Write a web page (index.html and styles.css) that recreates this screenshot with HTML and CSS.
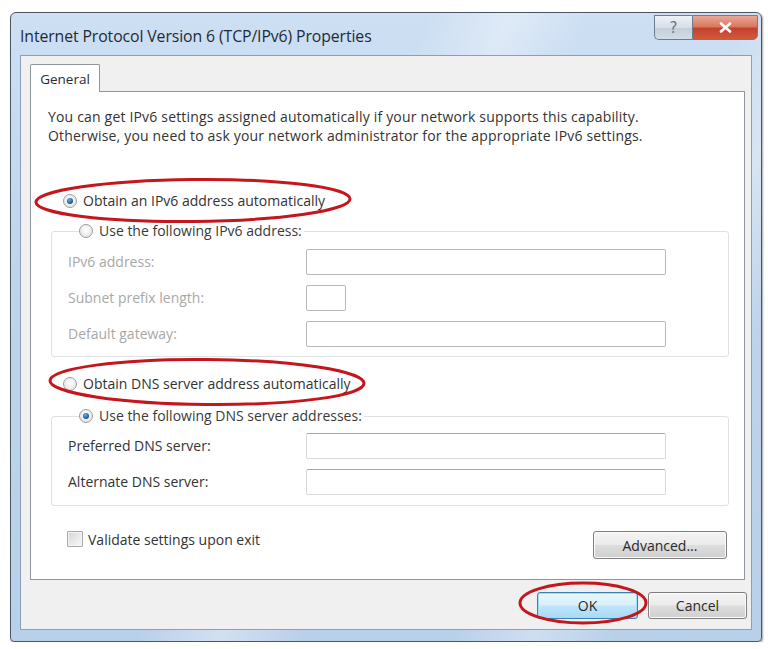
FILE: index.html
```html
<!DOCTYPE html>
<html>
<head>
<meta charset="utf-8">
<link rel="stylesheet" href="styles.css">
</head>
<body>
<div class="window">
  <div class="titlebar">
    <div class="title">Internet Protocol Version 6 (TCP/IPv6) Properties</div>
    <div class="caption">
      <div class="cap help">?</div>
      <div class="cap close">
        <svg width="13" height="11" viewBox="0 0 13 11"><path d="M2 1.5 L11 9.5 M11 1.5 L2 9.5" stroke="#fff" stroke-width="2.6" stroke-linecap="round"/></svg>
      </div>
    </div>
  </div>
  <div class="client">
    <div class="tabs"><div class="tab">General</div></div>
    <div class="panel">
      <p class="desc">You can get IPv6 settings assigned automatically if your network supports this capability.<br>Otherwise, you need to ask your network administrator for the appropriate IPv6 settings.</p>
      <div class="option first"><span class="radio checked"></span><span>Obtain an IPv6 address automatically</span></div>
      <fieldset class="group">
        <legend class="option"><span class="radio"></span><span>Use the following IPv6 address:</span></legend>
        <div class="fields disabled">
          <span class="lbl">IPv6 address:</span><span class="input wide"></span>
          <span class="lbl">Subnet prefix length:</span><span class="input small"></span>
          <span class="lbl">Default gateway:</span><span class="input wide"></span>
        </div>
      </fieldset>
      <div class="option second"><span class="radio"></span><span>Obtain DNS server address automatically</span></div>
      <fieldset class="group dns">
        <legend class="option"><span class="radio checked"></span><span>Use the following DNS server addresses:</span></legend>
        <div class="fields">
          <span class="lbl">Preferred DNS server:</span><span class="input wide"></span>
          <span class="lbl">Alternate DNS server:</span><span class="input wide"></span>
        </div>
      </fieldset>
      <div class="bottom">
        <div class="check-row"><span class="check"></span><span>Validate settings upon exit</span></div>
        <div class="btn adv">Advanced...</div>
      </div>
      <svg class="ring ring1" viewBox="0 0 320 47"><ellipse cx="160" cy="23.5" rx="157" ry="21" fill="none" stroke="#c4161c" stroke-width="3" transform="rotate(-0.6 160 23.5)"/></svg>
      <svg class="ring ring2" viewBox="0 0 320 50"><ellipse cx="160" cy="25" rx="157" ry="22.5" fill="none" stroke="#c4161c" stroke-width="3" transform="rotate(0.5 160 25)"/></svg>
    </div>
    <div class="actions">
      <div class="btn ok">OK</div>
      <div class="btn">Cancel</div>
    </div>
    <svg class="ring ring3" viewBox="0 0 132 46"><ellipse cx="66" cy="23" rx="63" ry="20" fill="none" stroke="#c4161c" stroke-width="3"/></svg>
  </div>
</div>
</body>
</html>
```
FILE: styles.css
```css
html, body {
  margin: 0;
  padding: 0;
  background: #ffffff;
}
body {
  font-family: "Open Sans", "Noto Sans", sans-serif;
  font-size: 14px;
  color: #333333;
  padding: 12px 0 0 10px;
}
.window {
  width: 752px;
  height: 630px;
  border: 1px solid #4c5663;
  border-radius: 6px 6px 4px 4px;
  background:
    linear-gradient(115deg, rgba(255,255,255,0) 40%, rgba(255,255,255,0.35) 48%, rgba(255,255,255,0) 56%, rgba(255,255,255,0) 70%, rgba(255,255,255,0.3) 78%, rgba(255,255,255,0) 86%),
    linear-gradient(to bottom, #cddff3 0%, #bed4ec 45%, #b9d0ea 100%);
  padding: 0 9px 11px 9px;
  box-sizing: border-box;
  display: flex;
  flex-direction: column;
  box-shadow: 1px 1px 2px rgba(0,0,0,0.35);
}
.titlebar {
  height: 42px;
  display: flex;
  justify-content: space-between;
  align-items: flex-start;
  flex: none;
}
.title {
  font-size: 15.8px;
  color: #1f2a36;
  padding-top: 12px;
  letter-spacing: -0.1px;
}
.caption {
  display: flex;
  margin-top: 2px;
  margin-right: -6px;
}
.cap {
  height: 23px;
  border: 1px solid #6c7d92;
  box-sizing: content-box;
  display: flex;
  align-items: center;
  justify-content: center;
}
.help {
  width: 37px;
  border-radius: 0 0 0 5px;
  border-right: none;
  background: linear-gradient(to bottom, #eef2f6 0%, #d6dee7 50%, #c3ced9 51%, #d2dce6 100%);
  color: #6a7684;
  font-family: "DejaVu Sans", sans-serif;
  font-size: 15px;
}
.close {
  width: 64px;
  border-radius: 0 0 5px 0;
  background: linear-gradient(to bottom, #e9a895 0%, #d8765d 48%, #c4402a 52%, #cf5a3e 100%);
}
.client {
  flex: 1;
  background: #f0f0f0;
  border: 1px solid #8aa0ba;
  position: relative;
  display: flex;
  flex-direction: column;
  padding: 8px 6px 0 9px;
}
.tabs {
  display: flex;
  height: 28px;
  margin-bottom: -1px;
  position: relative;
  z-index: 1;
}
.tab {
  width: 68px;
  background: #ffffff;
  border: 1px solid #8e959d;
  border-bottom: none;
  border-radius: 2px 2px 0 0;
  display: flex;
  align-items: center;
  justify-content: center;
  color: #2a2a2a;
  font-size: 13.5px;
}
.panel {
  background: #ffffff;
  border: 1px solid #8e959d;
  height: 489px;
  box-sizing: border-box;
  position: relative;
  padding: 16px 17px 0 17px;
}
.desc {
  margin: 0;
  line-height: 18.5px;
  letter-spacing: 0.18px;
}
.option {
  display: flex;
  align-items: center;
  gap: 6px;
  height: 18px;
  line-height: 18px;
}
.first {
  margin-top: 47px;
  margin-left: 15px;
}
.second {
  margin-top: 18px;
  margin-left: 15px;
}
.radio {
  width: 12px;
  height: 12px;
  border: 1px solid #9a9ea3;
  border-radius: 50%;
  background: radial-gradient(circle at 50% 40%, #ffffff 0%, #e8e8e8 70%, #d6d6d6 100%);
  display: inline-flex;
  align-items: center;
  justify-content: center;
  flex: none;
}
.radio.checked::after {
  content: "";
  width: 6px;
  height: 6px;
  border-radius: 50%;
  background: radial-gradient(circle at 40% 35%, #6fb2df 0%, #1c5f95 60%, #134470 100%);
}
.group {
  margin: 12px 0 0 3px;
  padding: 0 0 9px 16px;
  border: 1px solid #dde2e6;
  border-radius: 3px;
  width: 678px;
  box-sizing: border-box;
}
.group legend {
  padding: 0 2px 0 0;
  margin-left: 11px;
  color: #3a3a3a;
}
.fields {
  display: grid;
  grid-template-columns: 238px auto;
  row-gap: 10px;
  align-items: center;
  padding-top: 9px;
}
.fields.disabled .lbl {
  color: #a8a8a8;
}
.lbl {
  line-height: 18px;
}
.input {
  height: 24px;
  border: 1px solid #b8b8b8;
  border-radius: 2px;
  background: #ffffff;
  display: block;
}
.dns {
  margin-top: 14px;
  padding-bottom: 10px;
}
.dns .input {
  border-color: #d9d9d9;
  border-top-color: #a9a9a9;
}
.wide { width: 358px; }
.small { width: 38px; }
.dns .fields {
  padding-top: 8px;
}
.bottom {
  display: flex;
  justify-content: space-between;
  align-items: flex-start;
  margin-top: 24px;
  margin-left: 19px;
  width: 660px;
}
.check-row {
  display: flex;
  align-items: center;
  gap: 5px;
  height: 18px;
}
.check {
  width: 14px;
  height: 14px;
  border: 1px solid #a5a7aa;
  border-radius: 1px;
  background: linear-gradient(135deg, #d4d4d4 0%, #ececec 60%, #f7f7f7 100%);
  box-shadow: inset 0 0 0 1px #f4f4f4;
}
.btn {
  height: 25px;
  border: 1px solid #7e7e7e;
  border-radius: 3px;
  background: linear-gradient(to bottom, #f4f4f4 0%, #ebebeb 48%, #dddddd 52%, #cfcfcf 100%);
  display: flex;
  align-items: center;
  justify-content: center;
  width: 97px;
  color: #2a2a2a;
  box-shadow: inset 0 0 0 1px #fbfbfb;
}
.adv {
  width: 132px;
  height: 26px;
  margin-top: 1px;
}
.actions {
  display: flex;
  justify-content: flex-end;
  gap: 10px;
  margin-top: 12px;
  margin-right: -2px;
}
.ok {
  width: 99px;
  border-color: #3c7fb1;
  background: linear-gradient(to bottom, #eaf6fd 0%, #d9f0fc 48%, #bee6fd 52%, #a7d9f5 100%);
  box-shadow: inset 0 0 0 1px #9ee0f8;
}
.ring {
  position: absolute;
  overflow: visible;
}
.ring1 {
  left: 2px;
  top: 85px;
  width: 320px;
  height: 47px;
}
.ring2 {
  left: 16px;
  top: 265px;
  width: 320px;
  height: 50px;
}
.ring3 {
  left: 496px;
  top: 524px;
  width: 132px;
  height: 46px;
}
```
